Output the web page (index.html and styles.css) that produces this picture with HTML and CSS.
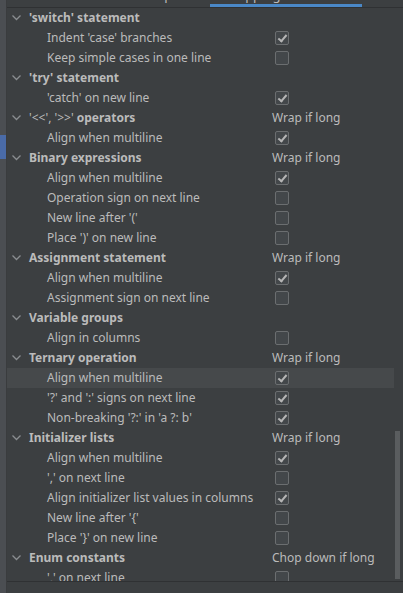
FILE: index.html
```html
<!DOCTYPE html>
<html>
<head>
<meta charset="utf-8">
<link rel="stylesheet" href="styles.css">
</head>
<body>
<div class="app">
  <div class="strip"><div class="strip-mark"></div></div>
  <div class="main">
    <div class="tabbar">
      <div class="tab tab-spaces">Spaces</div>
      <div class="tab tab-active">Wrapping and Braces</div>
    </div>
    <div class="scroller">
      <div class="rows">
        <div class="row group"><span class="chev"><svg width="9" height="6" viewBox="0 0 9 6"><path d="M0.5 0.5 L4.5 4.5 L8.5 0.5" fill="none" stroke="#8a8d90" stroke-width="1.3"/></svg></span><span class="label">'switch' statement</span><span class="opt"></span></div>
        <div class="row child"><span class="label">Indent 'case' branches</span><span class="opt"><span class="cb on"></span></span></div>
        <div class="row child"><span class="label">Keep simple cases in one line</span><span class="opt"><span class="cb"></span></span></div>
        <div class="row group"><span class="chev"><svg width="9" height="6" viewBox="0 0 9 6"><path d="M0.5 0.5 L4.5 4.5 L8.5 0.5" fill="none" stroke="#8a8d90" stroke-width="1.3"/></svg></span><span class="label">'try' statement</span><span class="opt"></span></div>
        <div class="row child"><span class="label">'catch' on new line</span><span class="opt"><span class="cb on"></span></span></div>
        <div class="row group"><span class="chev"><svg width="9" height="6" viewBox="0 0 9 6"><path d="M0.5 0.5 L4.5 4.5 L8.5 0.5" fill="none" stroke="#8a8d90" stroke-width="1.3"/></svg></span><span class="label"><span class="thin">'&lt;&lt;', '&gt;&gt;'</span> operators</span><span class="opt text">Wrap if long</span></div>
        <div class="row child"><span class="label">Align when multiline</span><span class="opt"><span class="cb on"></span></span></div>
        <div class="row group"><span class="chev"><svg width="9" height="6" viewBox="0 0 9 6"><path d="M0.5 0.5 L4.5 4.5 L8.5 0.5" fill="none" stroke="#8a8d90" stroke-width="1.3"/></svg></span><span class="label">Binary expressions</span><span class="opt text">Wrap if long</span></div>
        <div class="row child"><span class="label">Align when multiline</span><span class="opt"><span class="cb on"></span></span></div>
        <div class="row child"><span class="label">Operation sign on next line</span><span class="opt"><span class="cb"></span></span></div>
        <div class="row child"><span class="label">New line after '('</span><span class="opt"><span class="cb"></span></span></div>
        <div class="row child"><span class="label">Place ')' on new line</span><span class="opt"><span class="cb"></span></span></div>
        <div class="row group"><span class="chev"><svg width="9" height="6" viewBox="0 0 9 6"><path d="M0.5 0.5 L4.5 4.5 L8.5 0.5" fill="none" stroke="#8a8d90" stroke-width="1.3"/></svg></span><span class="label">Assignment statement</span><span class="opt text">Wrap if long</span></div>
        <div class="row child"><span class="label">Align when multiline</span><span class="opt"><span class="cb on"></span></span></div>
        <div class="row child"><span class="label">Assignment sign on next line</span><span class="opt"><span class="cb"></span></span></div>
        <div class="row group"><span class="chev"><svg width="9" height="6" viewBox="0 0 9 6"><path d="M0.5 0.5 L4.5 4.5 L8.5 0.5" fill="none" stroke="#8a8d90" stroke-width="1.3"/></svg></span><span class="label">Variable groups</span><span class="opt"></span></div>
        <div class="row child"><span class="label">Align in columns</span><span class="opt"><span class="cb"></span></span></div>
        <div class="row group"><span class="chev"><svg width="9" height="6" viewBox="0 0 9 6"><path d="M0.5 0.5 L4.5 4.5 L8.5 0.5" fill="none" stroke="#8a8d90" stroke-width="1.3"/></svg></span><span class="label">Ternary operation</span><span class="opt text">Wrap if long</span></div>
        <div class="row child selected"><span class="label">Align when multiline</span><span class="opt"><span class="cb on"></span></span></div>
        <div class="row child"><span class="label">'?' and ':' signs on next line</span><span class="opt"><span class="cb on"></span></span></div>
        <div class="row child"><span class="label">Non-breaking '?:' in 'a ?: b'</span><span class="opt"><span class="cb on"></span></span></div>
        <div class="row group"><span class="chev"><svg width="9" height="6" viewBox="0 0 9 6"><path d="M0.5 0.5 L4.5 4.5 L8.5 0.5" fill="none" stroke="#8a8d90" stroke-width="1.3"/></svg></span><span class="label">Initializer lists</span><span class="opt text">Wrap if long</span></div>
        <div class="row child"><span class="label">Align when multiline</span><span class="opt"><span class="cb on"></span></span></div>
        <div class="row child"><span class="label">',' on next line</span><span class="opt"><span class="cb"></span></span></div>
        <div class="row child"><span class="label">Align initializer list values in columns</span><span class="opt"><span class="cb on"></span></span></div>
        <div class="row child"><span class="label">New line after '{'</span><span class="opt"><span class="cb"></span></span></div>
        <div class="row child"><span class="label">Place '}' on new line</span><span class="opt"><span class="cb"></span></span></div>
        <div class="row group"><span class="chev"><svg width="9" height="6" viewBox="0 0 9 6"><path d="M0.5 0.5 L4.5 4.5 L8.5 0.5" fill="none" stroke="#8a8d90" stroke-width="1.3"/></svg></span><span class="label">Enum constants</span><span class="opt text">Chop down if long</span></div>
        <div class="row child"><span class="label">',' on next line</span><span class="opt"><span class="cb"></span></span></div>
      </div>
      <div class="scrollbar"></div>
    </div>
    <div class="footer"></div>
  </div>
</div>
</body>
</html>
```
FILE: styles.css
```css
* { box-sizing: border-box; }
html, body { margin: 0; padding: 0; }
body {
  background: #3c3f41;
  color: #bbbbbb;
  font-family: "Noto Sans", "Open Sans", sans-serif;
  font-size: 12px;
  width: 403px;
  height: 593px;
  overflow: hidden;
}
.app { display: flex; height: 593px; }
.strip {
  width: 7px;
  background: #4b4e52;
  border-right: 1px solid #3a3c3e;
  position: relative;
  flex: none;
}
.strip-mark {
  position: absolute;
  left: 0; top: 135px;
  width: 6px; height: 24px;
  background: #4a6ba8;
}
.main { flex: 1; display: flex; flex-direction: column; min-width: 0; }
.tabbar {
  height: 8px;
  flex: none;
  border-bottom: 1px solid #2f3133;
  position: relative;
  overflow: hidden;
}
.tab {
  position: absolute;
  top: -13px;
  line-height: 16px;
  font-size: 13px;
  color: #bbbbbb;
}
.tab-spaces { left: 150px; }
.tab-active {
  left: 203px;
  width: 152px;
  text-align: center;
  height: 20px;
  border-bottom: 3px solid #4a88c7;
}
.scroller {
  flex: 1;
  position: relative;
  overflow: hidden;
  min-height: 0;
}
.rows { width: 387px; }
.row {
  height: 20px;
  display: flex;
  align-items: center;
  white-space: nowrap;
  padding-bottom: 1px;
}
.row.selected { background: #46494b; }
.row .label { width: 265px; flex: none; }
.row.group { padding-left: 5px; }
.row.group .label { width: 243px; font-weight: bold; }
.row.group .thin { font-weight: normal; }
.row.child .label { padding-left: 40px; }
.chev { width: 17px; flex: none; display: flex; align-items: center; padding-top: 1px; }
.opt { flex: 1; display: flex; align-items: center; }
.cb {
  margin-left: 3px;
  width: 14px; height: 14px;
  border: 1px solid #6b6e70;
  border-radius: 2px;
  background: #43474a;
  position: relative;
}
.cb.on::after {
  content: "";
  position: absolute;
  left: 4px; top: 1px;
  width: 3px; height: 7px;
  border-right: 2px solid #b5b5b5;
  border-bottom: 2px solid #b5b5b5;
  transform: rotate(40deg);
}
.scrollbar {
  position: absolute;
  right: 3px;
  top: 423px;
  width: 5px;
  height: 148px;
  background: #5a5d5f;
}
.footer {
  height: 12px;
  flex: none;
  border-top: 1px solid #2f3133;
  background: #3c3f41;
}
```
